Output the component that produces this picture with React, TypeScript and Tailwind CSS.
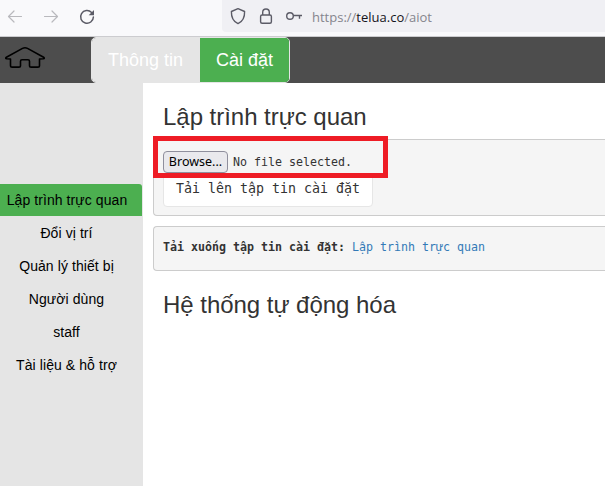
const menu = ['Đổi vị trí', 'Quản lý thiết bị', 'Người dùng', 'staff', 'Tài liệu & hỗ trợ'];

function BrowserBar() {
  return (
    <div className="flex h-[37px] shrink-0 border-b border-[#cccccf] bg-[#f9f9fb]">
      <svg className="h-8 w-[110px] shrink-0" viewBox="0 0 110 32" fill="none" strokeLinecap="round" strokeLinejoin="round">
        <path d="M21.5 16.5H8.5M14 11l-5.5 5.5L14 22M44.500 16.500H57.500M52 11l5.500 5.500L52 22" stroke="#b9b9bd" strokeWidth="1.2" />
        <path d="M91.600 12.400A6.400 6.400 0 1 0 93.400 17" stroke="#5b5b66" strokeWidth="1.500" />
        <path d="M94 10v5.300h-5.300z" fill="#5b5b66" />
      </svg>
      <div className="ml-[112px] flex h-8 flex-1 rounded-bl-[4px] bg-[#f0f0f4]">
        <svg className="h-8 w-[90px] shrink-0" viewBox="222 0 90 32" fill="none" stroke="#5b5b66" strokeWidth="1.4" strokeLinejoin="round">
          <path d="M238 8.700l6.600 2.800c.2 5.800-1.600 9.900-6.600 12.100-5-2.200-6.800-6.300-6.600-12.100z" />
          <rect x="260.600" y="15" width="10.800" height="8.300" rx="1.500" />
          <path d="M262.700 15v-2.700a3.300 3.300 0 0 1 6.600 0V15" />
          <circle cx="290" cy="16" r="3.300" />
          <path d="M293.300 15.500H302M299.500 15.500v3.300" />
        </svg>
        <div className="pt-[7px] font-['Open_Sans',sans-serif] text-[13px] leading-5 whitespace-nowrap text-[#85858d]">
          https://<span className="text-[#15141a]">telua.co</span>/aiot
        </div>
      </div>
    </div>
  );
}

export default function App() {
  return (
    <div className="flex h-[486px] w-[605px] flex-col overflow-hidden bg-white font-['Liberation_Sans',Arial,sans-serif] text-[#333]">
      <BrowserBar />
      <header className="flex h-[46px] shrink-0 bg-[#4d4d4d]">
        <svg className="h-[46px] w-[91px]" viewBox="0 37 91 46" fill="none" stroke="#000" strokeWidth="1.6" strokeLinejoin="round">
          <path d="M6.400 57.200L22.500 48.400q2.500-1.200 5 0L43.600 57.200q1.600 1.200-.4 1.500L39.500 59v6.400q0 1.700-1.700 1.700h-6.600q-1.700 0-1.700-1.700v-4.200q0-1.500-1.500-1.500h-6q-1.500 0-1.500 1.500v4.200q0 1.700-1.700 1.700h-6.600q-1.700 0-1.700-1.700V59l-3.700-.3q-2-.3-.4-1.500z" />
        </svg>
        <div className="flex h-[46px] w-[199px] overflow-hidden rounded-[5px] border border-[#e5e5e5] text-[18px] leading-[44px] whitespace-nowrap text-white">
          <div className="w-[108px] bg-[#e5e5e5] pr-px text-center">Thông tin</div>
          <div className="flex-1 bg-[#4caf50] text-center">Cài đặt</div>
        </div>
      </header>
      <div className="flex flex-1">
        <nav className="w-[143px] shrink-0 bg-[#e5e5e5] pt-[101px] text-center text-[14px] tracking-[0.08px] text-black">
          <div className="mb-px h-8 w-[142px] rounded-tr-[3px] bg-[#4caf50] pr-2 leading-8 whitespace-nowrap">Lập trình trực quan</div>
          {menu.map((item) => (
            <div key={item} className="h-[33px] pr-[10px] leading-8">{item}</div>
          ))}
        </nav>
        <main className="min-w-0 flex-1 pl-[10px]">
          <h2 className="h-14 pt-5 pl-[10px] text-[24px] leading-[28px] tracking-[-0.03px]">Lập trình trực quan</h2>
          <section className="relative h-[77px] rounded-l-[4px] border border-r-0 border-[#ccc] bg-[#f5f5f5] pt-[10px] pl-[9px] font-['DejaVu_Sans_Mono',monospace]">
            <div className="flex h-[23px] items-center">
              <button className="h-[22px] w-[65px] rounded-[4px] border border-[#8f8f9d] bg-[#e9e9ed] font-['Noto_Sans',sans-serif] text-[12.500px] leading-[20px] text-black">Browse...</button>
              <span className="ml-[5px] text-[11.630px] leading-5 whitespace-nowrap">No file selected.</span>
            </div>
            <button className="block h-[34px] w-[210px] rounded-[4px] border border-[#e6e6e6] bg-white pb-[2px] text-[13.290px] leading-5 whitespace-nowrap">Tải lên tập tin cài đặt</button>
            <div className="absolute -top-[4px] -left-px h-[42px] w-[235px] border-5 border-[#ee1c25]" />
          </section>
          <section className="mt-[10px] h-[45px] rounded-l-[4px] border border-r-0 border-[#ccc] bg-[#f5f5f5] pt-[10px] pl-[9px] font-['DejaVu_Sans_Mono',monospace] text-[11.630px] leading-5 whitespace-nowrap">
            <b>Tải xuống tập tin cài đặt:</b> <a className="text-[#337ab7]">Lập trình trực quan</a>
          </section>
          <h2 className="mt-5 pl-[10px] text-[24px] leading-[28px] tracking-[-0.03px]">Hệ thống tự động hóa</h2>
        </main>
      </div>
    </div>
  );
}
